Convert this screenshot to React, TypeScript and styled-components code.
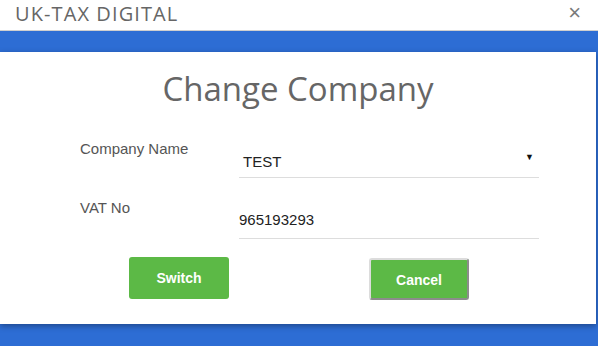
import * as React from 'react';
import styled, { createGlobalStyle } from 'styled-components';

const GlobalStyle = createGlobalStyle`
  html, body {
    margin: 0;
    padding: 0;
    background: #2d6dd4;
  }
  body {
    font-family: 'Open Sans', 'Liberation Sans', sans-serif;
  }
`;

const Page = styled.div`
  width: 598px;
  height: 346px;
  background: #2d6dd4;
  display: flex;
  flex-direction: column;
  overflow: hidden;
`;

const Header = styled.div`
  height: 31px;
  box-sizing: border-box;
  background: #fff;
  border-bottom: 1px solid #cfcfcf;
  display: flex;
  align-items: center;
  justify-content: space-between;
  padding: 0 17px 0 15px;
`;

const Brand = styled.span`
  font-family: 'Open Sans', sans-serif;
  font-size: 20px;
  color: #666;
  letter-spacing: 1.1px;
  line-height: 1;
  margin-top: -2px;
`;

const Close = styled.span`
  font-family: 'Liberation Sans', sans-serif;
  font-size: 22px;
  color: #7a7a7a;
  line-height: 1;
  margin-top: -5px;
`;

const Card = styled.div`
  margin: 21px 2px 0 0;
  height: 272px;
  background: #fff;
  box-shadow: 0 2px 6px rgba(0, 0, 0, 0.35);
  display: flex;
  flex-direction: column;
`;

const Title = styled.h1`
  margin: 13px 0 0;
  text-align: center;
  font-family: 'Open Sans', sans-serif;
  font-weight: 400;
  font-size: 33px;
  color: #666;
  line-height: 48px;
`;

const Form = styled.div`
  margin: 25px 0 0 80px;
  display: flex;
  flex-direction: column;
  gap: 21px;
`;

const Row = styled.div`
  display: grid;
  grid-template-columns: 159px 300px;
  align-items: start;
`;

const Label = styled.label<{ $top: number }>`
  font-family: 'Liberation Sans', Arial, sans-serif;
  font-size: 15px;
  color: #555;
  padding-top: ${(p) => p.$top}px;
`;

const Field = styled.div<{ $pad?: number; $bottom: number }>`
  height: 40px;
  box-sizing: border-box;
  border-bottom: 1px solid #ddd;
  display: flex;
  align-items: flex-end;
  justify-content: space-between;
  padding: 0 5px ${(p) => p.$bottom}px ${(p) => p.$pad ?? 0}px;
  font-family: 'Liberation Sans', Arial, sans-serif;
  font-size: 15px;
  color: #222;
  line-height: 17px;
`;

const Caret = styled.span`
  font-size: 9px;
  color: #111;
  align-self: center;
  margin-top: 6px;
`;

const Buttons = styled.div`
  margin: 18px 0 0 129px;
  width: 340px;
  display: flex;
  justify-content: space-between;
`;

const Button = styled.button<{ $bordered?: boolean }>`
  width: 100px;
  height: 42px;
  box-sizing: border-box;
  background: #5cb946;
  color: #fff;
  font-family: 'Liberation Sans', Arial, sans-serif;
  font-weight: bold;
  font-size: 14px;
  border-radius: 3px;
  border: ${(p) => (p.$bordered ? '2px solid' : 'none')};
  border-color: #dcdcdc #8c8c8c #8c8c8c #dcdcdc;
  margin-top: ${(p) => (p.$bordered ? '1px' : '0')};
  padding: ${(p) => (p.$bordered ? '2px 0 0' : '0')};
`;

export default function App() {
  return (
    <Page>
      <GlobalStyle />
      <Header>
        <Brand>UK-TAX DIGITAL</Brand>
        <Close>×</Close>
      </Header>
      <Card>
        <Title>Change Company</Title>
        <Form>
          <Row>
            <Label $top={2}>Company Name</Label>
            <Field $pad={4} $bottom={7}>
              <span>TEST</span>
              <Caret>▼</Caret>
            </Field>
          </Row>
          <Row>
            <Label $top={0}>VAT No</Label>
            <Field $bottom={10}>
              <span>965193293</span>
            </Field>
          </Row>
        </Form>
        <Buttons>
          <Button>Switch</Button>
          <Button $bordered>Cancel</Button>
        </Buttons>
      </Card>
    </Page>
  );
}
